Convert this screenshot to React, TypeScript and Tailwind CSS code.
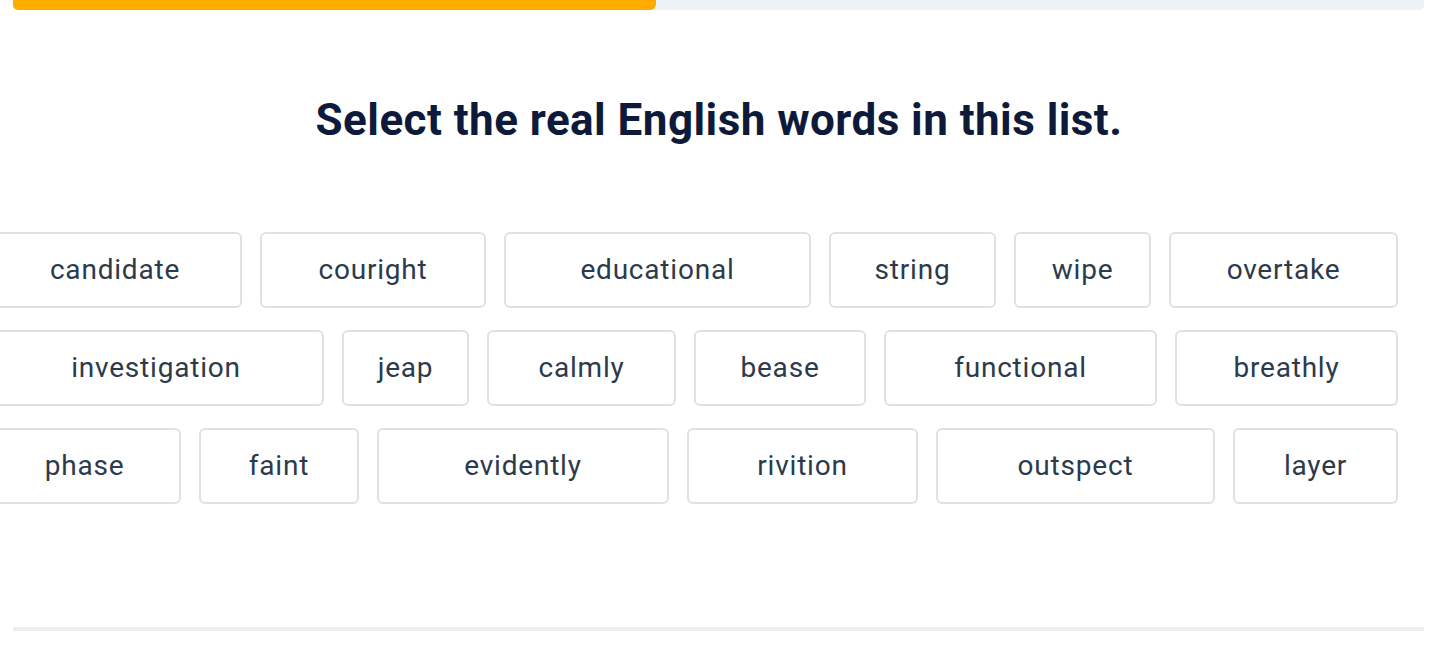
import React from 'react';

type Word = { text: string; w: number };

const rows: Word[][] = [
  [
    { text: 'candidate', w: 254 },
    { text: 'couright', w: 226 },
    { text: 'educational', w: 307 },
    { text: 'string', w: 167 },
    { text: 'wipe', w: 137 },
    { text: 'overtake', w: 229 },
  ],
  [
    { text: 'investigation', w: 336 },
    { text: 'jeap', w: 127 },
    { text: 'calmly', w: 189 },
    { text: 'bease', w: 172 },
    { text: 'functional', w: 273 },
    { text: 'breathly', w: 223 },
  ],
  [
    { text: 'phase', w: 193 },
    { text: 'faint', w: 160 },
    { text: 'evidently', w: 292 },
    { text: 'rivition', w: 231 },
    { text: 'outspect', w: 279 },
    { text: 'layer', w: 165 },
  ],
];

export default function App() {
  return (
    <div className="w-[1456px] h-[672px] bg-white overflow-hidden relative" style={{ fontFamily: 'Roboto, "Liberation Sans", sans-serif' }}>
      {/* progress */}
      <div className="ml-[13px] w-[1411px] h-[10px] bg-[#eef2f5] rounded-b-[5px] overflow-hidden">
        <div className="w-[643px] h-full bg-[#ffab00] rounded-br-[6px]" />
      </div>

      <h1 className="mt-[88px] pr-[18px] text-center text-[44px] font-bold text-[#0e1a3a] leading-[44px] tracking-[0.45px]">
        Select the real English words in this list.
      </h1>

      <div className="mt-[90px] ml-[-13px] w-[1411px] flex flex-col gap-[22px]">
        {rows.map((row, i) => (
          <div key={i} className="flex justify-end gap-[18px]">
            {row.map(word => (
              <button
                key={word.text}
                className="h-[76px] shrink-0 flex items-center justify-center rounded-[6px] border-2 border-[#dfe2e5] bg-white text-[28px] text-[#2c3a4b] tracking-[0.8px]"
                style={{ width: word.w }}
              >
                {word.text}
              </button>
            ))}
          </div>
        ))}
      </div>

      <div className="absolute left-[13px] top-[627px] w-[1411px] h-[4px] bg-[#eeeeee]" />
    </div>
  );
}
